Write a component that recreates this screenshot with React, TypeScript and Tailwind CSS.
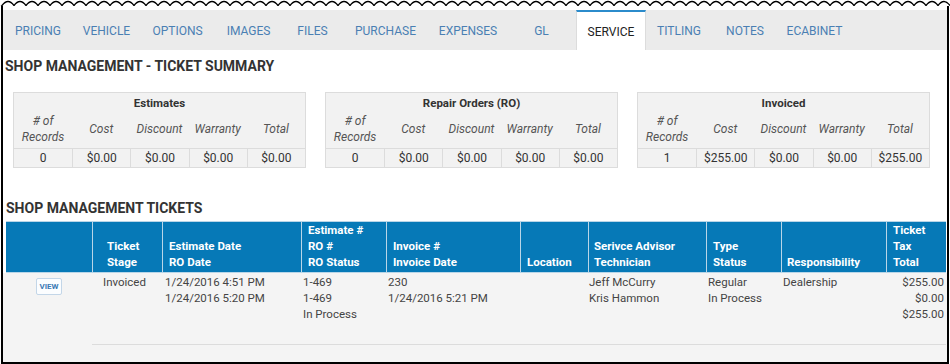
const tabs = [
  { label: "PRICING", w: "w-[68px]" },
  { label: "VEHICLE", w: "w-[69px]" },
  { label: "OPTIONS", w: "w-[73px]" },
  { label: "IMAGES", w: "w-[69px]" },
  { label: "FILES", w: "w-[59px]" },
  { label: "PURCHASE", w: "w-[87px]" },
  { label: "EXPENSES", w: "w-[78px]" },
  { label: "GL", w: "w-[69px]" },
  { label: "SERVICE", w: "w-[70px]", active: true },
  { label: "TITLING", w: "w-[66px]" },
  { label: "NOTES", w: "w-[66px]" },
  { label: "ECABINET", w: "w-[73px]" },
];

const summaries = [
  { title: "Estimates", values: ["0", "$0.00", "$0.00", "$0.00", "$0.00"] },
  { title: "Repair Orders (RO)", values: ["0", "$0.00", "$0.00", "$0.00", "$0.00"] },
  { title: "Invoiced", values: ["1", "$255.00", "$0.00", "$0.00", "$255.00"] },
];

const headers = [
  { lines: [], cls: "" },
  { lines: ["Ticket", "Stage"], cls: "pl-[14px]" },
  { lines: ["Estimate Date", "RO Date"], cls: "pl-[6px]" },
  { lines: ["Estimate #", "RO #", "RO Status"], cls: "pl-[6px]" },
  { lines: ["Invoice #", "Invoice Date"], cls: "pl-[6px]" },
  { lines: ["Location"], cls: "pl-[6px]" },
  { lines: ["Serivce Advisor", "Technician"], cls: "pl-[5px]" },
  { lines: ["Type", "Status"], cls: "pl-[6px]" },
  { lines: ["Responsibility"], cls: "pl-[5px]" },
  { lines: ["Ticket", "Tax", "Total"], cls: "pl-[6px]" },
];

const row = [
  { lines: ["Invoiced"], cls: "pl-[11px]" },
  { lines: ["1/24/2016 4:51 PM", "1/24/2016 5:20 PM"], cls: "pl-[3px]" },
  { lines: ["1-469", "1-469", "In Process"], cls: "pl-[2px]" },
  { lines: ["230", "1/24/2016 5:21 PM"], cls: "pl-[2px]" },
  { lines: [], cls: "" },
  { lines: ["Jeff McCurry", "Kris Hammon"], cls: "pl-[1px]" },
  { lines: ["Regular", "In Process"], cls: "pl-[2px]" },
  { lines: ["Dealership"], cls: "pl-[2px]" },
  { lines: ["$255.00", "$0.00", "$255.00"], cls: "pr-[2px] text-right" },
];

function Zigzag() {
  let d = "M1,6 L2,5.5";
  for (let x = 2; x < 948; x += 12) {
    d += ` Q${x + 6},-2.5 ${x + 12},5.5`;
  }
  return (
    <svg width="950" height="6" viewBox="0 0 950 6" className="block">
      <path d={d} fill="none" stroke="#000" strokeWidth="1.3" />
    </svg>
  );
}

function SummaryBox({ title, values }: { title: string; values: string[] }) {
  return (
    <div className="w-[293px] border border-[#dcdcdc] bg-[#f2f2f2]">
      <div className="h-[20px] text-center text-[11.5px] font-bold leading-[20px] text-[#333]">{title}</div>
      <div className="grid h-[35px] grid-cols-5 items-center pb-[6px] text-center text-[12px] italic leading-[16px] text-[#555]">
        <div>
          # of
          <br />
          Records
        </div>
        <div>Cost</div>
        <div>Discount</div>
        <div>Warranty</div>
        <div>Total</div>
      </div>
      <div className="grid grid-cols-5 border-t border-[#dcdcdc] text-center text-[12px] leading-[18px] text-[#333]">
        {values.map((v, i) => (
          <div key={i} className={i > 0 ? "border-l border-[#dcdcdc]" : ""}>
            {v}
          </div>
        ))}
      </div>
    </div>
  );
}

export default function App() {
  return (
    <div className="h-[364px] w-[950px] overflow-hidden bg-white font-[Roboto,sans-serif]">
      <Zigzag />
      <div className="ml-px flex h-[358px] w-[948px] flex-col border-x-2 border-b-2 border-black">
        {/* tabs */}
        <div className="mt-[4px] flex h-[40px] bg-[#ebebeb] pl-px">
          {tabs.map((t) =>
            t.active ? (
              <div
                key={t.label}
                className={`${t.w} flex items-center justify-center border-x border-t-2 border-x-[#dcdcdc] border-t-[#2b8bcb] bg-white pt-[1px] text-[12px] text-[#222]`}
              >
                {t.label}
              </div>
            ) : (
              <div key={t.label} className={`${t.w} flex items-center justify-center pt-[1px] text-[12px] text-[#4a7fb3]`}>
                {t.label}
              </div>
            )
          )}
        </div>

        <h2 className="pl-[2px] pt-[6px] text-[14px] font-bold leading-[20px] text-[#333]">
          SHOP MANAGEMENT - TICKET SUMMARY
        </h2>

        <div className="ml-[10px] mt-[16px] flex gap-[19px]">
          {summaries.map((s) => (
            <SummaryBox key={s.title} title={s.title} values={s.values} />
          ))}
        </div>

        <h2 className="mt-[30px] pl-[3px] text-[14px] font-bold leading-[20px] text-[#333]">SHOP MANAGEMENT TICKETS</h2>

        <div className="ml-[3px] mt-[3px] grid w-[940px] grid-cols-[86px_70px_139px_85px_134px_68px_118px_75px_105px_60px] border-y border-[#b9d6e8] bg-[#0679b7] text-[11.5px] font-bold leading-[16px] text-white">
          {headers.map((h, i) => (
            <div
              key={i}
              className={`flex h-[50px] flex-col justify-end pb-[2px] ${h.cls} ${i > 0 ? "border-l border-[#b9d6e8]" : ""}`}
            >
              {h.lines.map((l) => (
                <div key={l}>{l}</div>
              ))}
            </div>
          ))}
        </div>

        <div className="flex-1 bg-[#f4f4f4]">
          <div className="ml-[3px] grid h-[71px] w-[940px] grid-cols-[86px_70px_139px_85px_134px_68px_118px_75px_105px_60px] pt-[1px] text-[11.5px] leading-[16px] text-[#444]">
            <div className="flex justify-center pt-[4px]">
              <div className="flex h-[17px] w-[26px] items-center justify-center rounded-[2px] border border-[#c3d6e8] bg-[#fbfdff] text-[8px] font-bold text-[#3b7bb5]">
                VIEW
              </div>
            </div>
            {row.map((c, i) => (
              <div key={i} className={c.cls}>
                {c.lines.map((l, j) => (
                  <div key={j}>{l}</div>
                ))}
              </div>
            ))}
          </div>
          <div className="ml-[89px] h-px w-[854px] bg-[#dcdcdc]" />
        </div>
      </div>
    </div>
  );
}
